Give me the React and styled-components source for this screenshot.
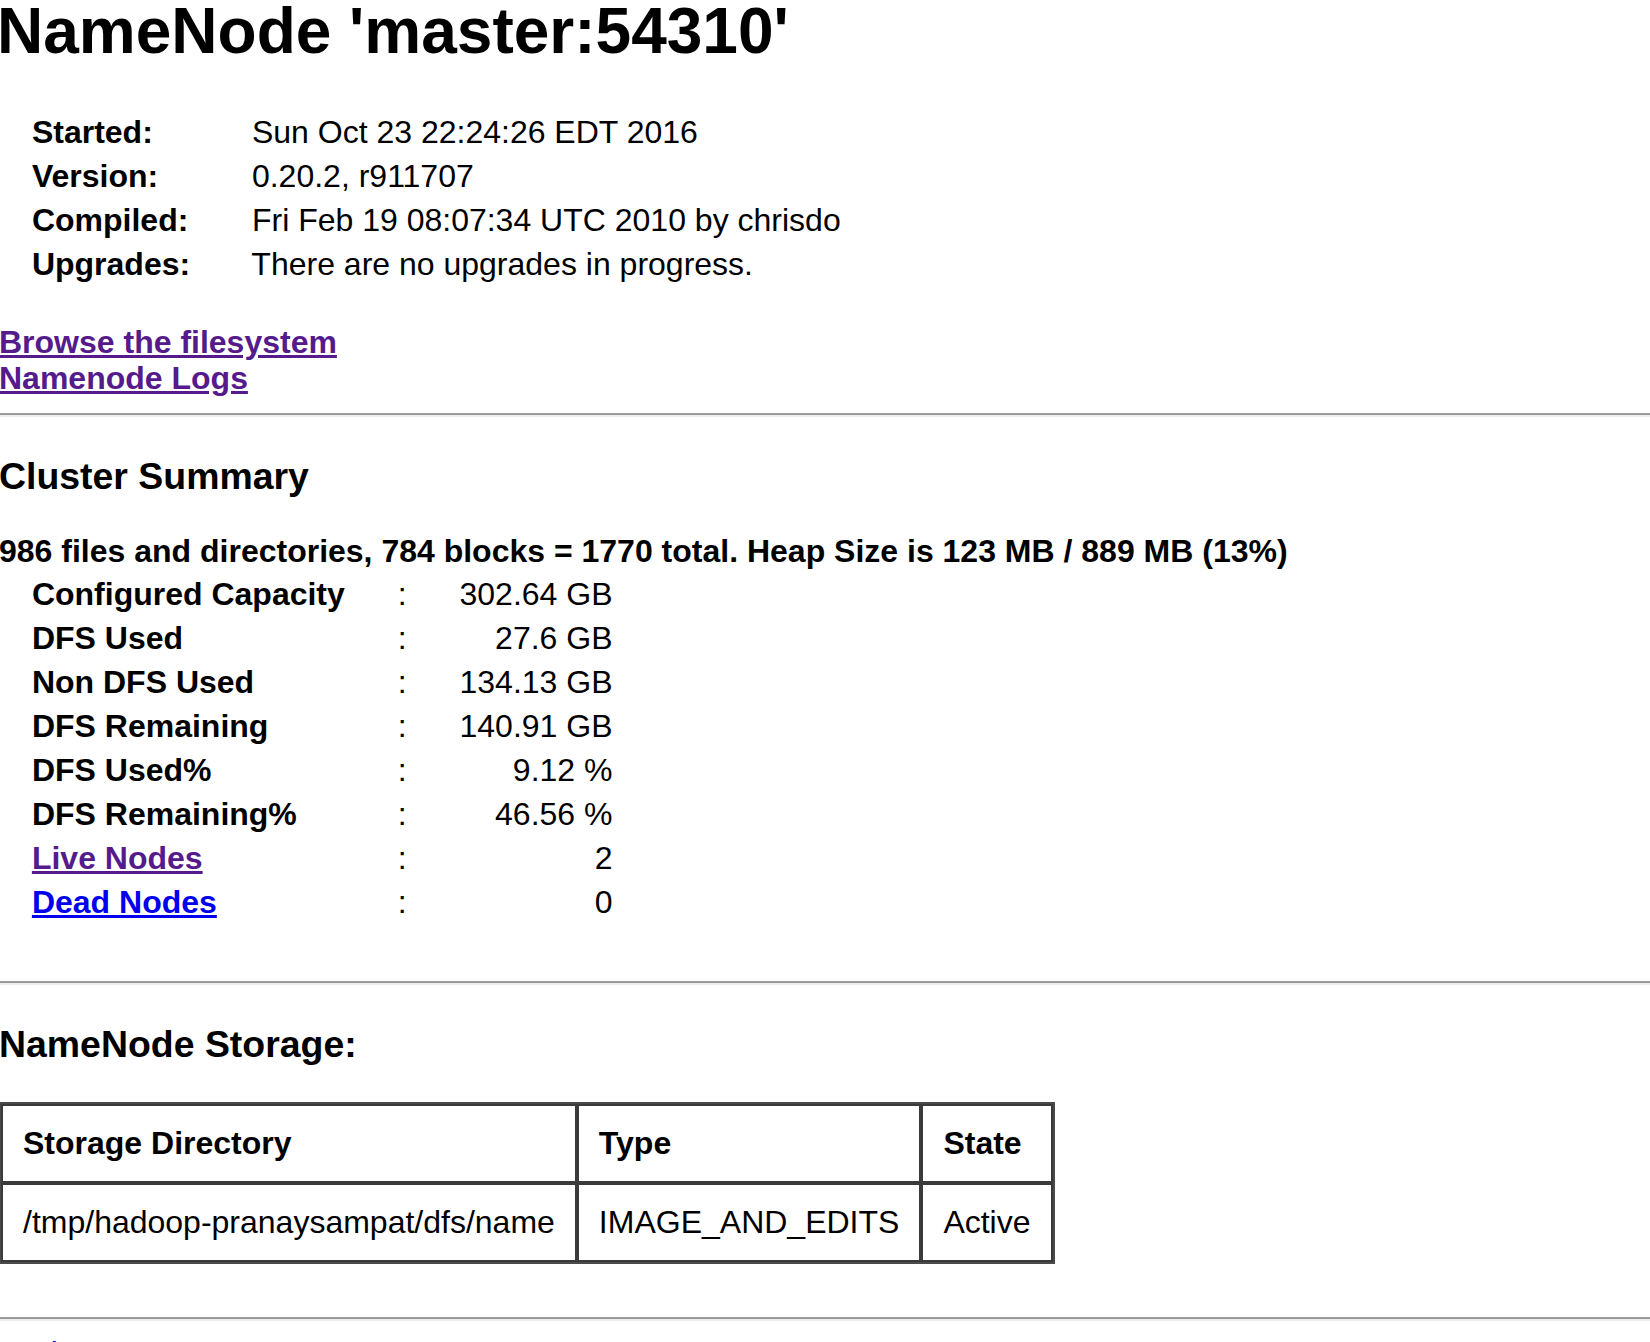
import React from "react";
import styled, { createGlobalStyle } from "styled-components";

const GlobalStyle = createGlobalStyle`
	html,
	body {
		margin: 0;
		padding: 0;
		background: #ffffff;
		overflow: hidden;
	}

	body {
		font-family: "Liberation Sans", Arial, Helvetica, sans-serif;
		font-size: 32px;
		line-height: 36px;
		color: #000000;
	}
`;

const Page = styled.div`
	margin-left: -1px;
`;

const Title = styled.h1`
	margin: -5px 0 41px -2px;
	font-size: 64px;
	line-height: 72px;
	font-weight: bold;
	white-space: nowrap;
`;

const SectionTitle = styled.h3`
	margin: 38px 0 ${(p) => p.$after}px;
	font-size: 37.44px;
	line-height: 43px;
	font-weight: bold;
`;

const DataTable = styled.table`
	margin-top: ${(p) => p.$top || 0}px;
	border-spacing: 4px;
	white-space: pre;
	font-size: 32px;
	line-height: 36px;
`;

const Cell = styled.td`
	padding: 2px 20px;
	vertical-align: top;
	font-weight: ${(p) => (p.$bold ? "bold" : "normal")};
	text-align: ${(p) => (p.$right ? "right" : "left")};
`;

const LinkBlock = styled.div`
	margin-top: 36px;
	display: flex;
	flex-direction: column;
	align-items: flex-start;
`;

const PageLink = styled.a`
	font-weight: ${(p) => (p.$plain ? "normal" : "bold")};
	color: ${(p) => (p.$visited ? "#551a8b" : "#0000ee")};
	text-decoration: underline;
`;

const Rule = styled.hr`
	margin: ${(p) => p.$top}px 0 0;
	height: 0;
	border: none;
	border-top: 2px solid #9a9a9a;
	border-bottom: 2px solid #ededed;
`;

const SummaryLine = styled.div`
	margin-top: 0;
	font-weight: bold;
	white-space: nowrap;
`;

const StorageTable = styled.table`
	border: 2px solid #4a4a4a;
	border-spacing: 0;
	white-space: pre;
	font-size: 32px;
	line-height: 36px;
`;

const StorageCell = styled.td`
	border: 2px solid #3a3a3a;
	padding: 19px 20px 20px;
	font-weight: ${(p) => (p.$head ? "bold" : "normal")};
`;

const Footer = styled.div`
	margin-top: 14px;
`;

const info = [
	[" Started: ", " Sun Oct 23 22:24:26 EDT 2016"],
	[" Version: ", " 0.20.2, r911707"],
	[" Compiled: ", " Fri Feb 19 08:07:34 UTC 2010 by chrisdo"],
	[" Upgrades: ", " There are no upgrades in progress."],
];

const summary = [
	["Configured Capacity", " 302.64 GB"],
	["DFS Used", " 27.6 GB"],
	["Non DFS Used", " 134.13 GB"],
	["DFS Remaining", " 140.91 GB"],
	["DFS Used%", " 9.12 %"],
	["DFS Remaining%", " 46.56 %"],
];

const nodes = [
	["Live Nodes", " 2", true],
	["Dead Nodes", " 0", false],
];

export default function App() {
	return (
		<>
			<GlobalStyle />
			<Page>
				<Title>NameNode 'master:54310'</Title>

				<DataTable>
					<tbody>
						{info.map(([label, value]) => (
							<tr key={label}>
								<Cell $bold>{label}</Cell>
								<Cell>{value}</Cell>
							</tr>
						))}
					</tbody>
				</DataTable>

				<LinkBlock>
					<PageLink href="#browse" $visited>
						Browse the filesystem
					</PageLink>
					<PageLink href="#logs" $visited>
						Namenode Logs
					</PageLink>
				</LinkBlock>

				<Rule $top={17} />

				<SectionTitle $after={35}>Cluster Summary</SectionTitle>
				<SummaryLine>
					986 files and directories, 784 blocks = 1770 total. Heap Size is 123
					MB / 889 MB (13%)
				</SummaryLine>

				<DataTable $top={1}>
					<tbody>
						{summary.map(([label, value]) => (
							<tr key={label}>
								<Cell $bold>{" " + label}</Cell>
								<Cell>{" :"}</Cell>
								<Cell $right>{value}</Cell>
							</tr>
						))}
						{nodes.map(([label, value, visited]) => (
							<tr key={label}>
								<Cell $bold>
									{" "}
									<PageLink href={"#" + label} $visited={visited}>
										{label}
									</PageLink>{" "}
								</Cell>
								<Cell>{" :"}</Cell>
								<Cell $right>{value}</Cell>
							</tr>
						))}
					</tbody>
				</DataTable>

				<Rule $top={55} />

				<SectionTitle $after={36}>NameNode Storage:</SectionTitle>
				<StorageTable>
					<thead>
						<tr>
							<StorageCell $head>Storage Directory</StorageCell>
							<StorageCell $head>Type</StorageCell>
							<StorageCell $head>State</StorageCell>
						</tr>
					</thead>
					<tbody>
						<tr>
							<StorageCell>/tmp/hadoop-pranaysampat/dfs/name</StorageCell>
							<StorageCell>IMAGE_AND_EDITS</StorageCell>
							<StorageCell>Active</StorageCell>
						</tr>
					</tbody>
				</StorageTable>

				<Rule $top={53} />

				<Footer>
					<PageLink href="#hadoop" $plain>
						Hadoop
					</PageLink>
					, 2016.
				</Footer>
			</Page>
		</>
	);
}
